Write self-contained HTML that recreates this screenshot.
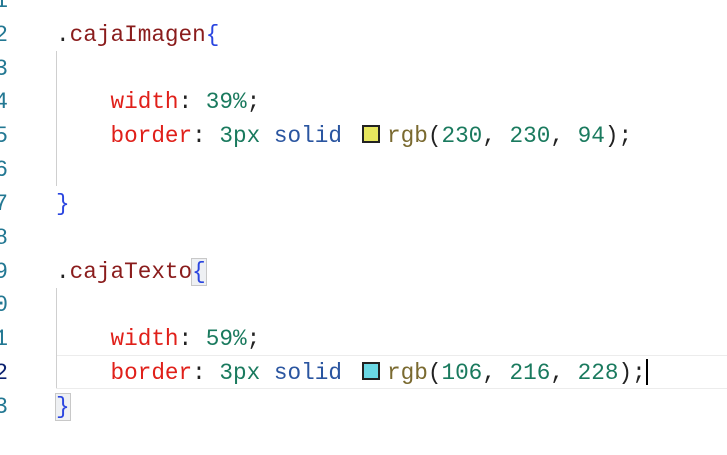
<!DOCTYPE html>
<html><head><style>
body{margin:0;width:727px;height:455px;background:#fff;overflow:hidden;position:relative;font-family:"Liberation Mono",monospace;font-size:22.7px}
.l{position:absolute;left:0;height:34px;line-height:34px;white-space:pre;width:727px}
.n{position:absolute;right:719px;color:#237893;text-align:right}
.c{position:absolute;left:56px}
.s{color:#8a1c1c}.p{color:#e0201a}.v{color:#1a7a5e}.k{color:#2a55a0}.b{color:#2a45e0}.f{color:#7a6a30}.d{color:#222}
.sw{display:inline-block;width:14px;height:14px;border:2px solid #222;vertical-align:-1px;margin:0 7px 0 20px}
.g{position:absolute;left:56px;width:1px;background:#cfcfcf}
.m{outline:1px solid #c8c8c8;background:#eef0f3}
</style></head><body>
<div style="position:absolute;left:56px;right:0;top:355px;height:32px;border-top:1px solid #ececec;border-bottom:1px solid #ececec"></div>
<div class="g" style="top:51px;height:135px"></div>
<div class="g" style="top:288px;height:100px"></div>
<div class="l" style="top:-16px"><span class="n">11</span></div>
<div class="l" style="top:18px"><span class="n">12</span><span class="c"><span class="d">.</span><span class="s">cajaImagen</span><span class="b">{</span></span></div>
<div class="l" style="top:52px"><span class="n">13</span></div>
<div class="l" style="top:85px"><span class="n">14</span><span class="c">    <span class="p">width</span><span class="d">: </span><span class="v">39%</span><span class="d">;</span></span></div>
<div class="l" style="top:119px"><span class="n">15</span><span class="c">    <span class="p">border</span><span class="d">: </span><span class="v">3px</span> <span class="k">solid</span><span class="sw" style="background:rgb(230,230,94)"></span><span class="f">rgb</span><span class="d">(</span><span class="v">230</span><span class="d">, </span><span class="v">230</span><span class="d">, </span><span class="v">94</span><span class="d">);</span></span></div>
<div class="l" style="top:153px"><span class="n">16</span></div>
<div class="l" style="top:187px"><span class="n">17</span><span class="c"><span class="b">}</span></span></div>
<div class="l" style="top:221px"><span class="n">18</span></div>
<div class="l" style="top:255px"><span class="n">19</span><span class="c"><span class="d">.</span><span class="s">cajaTexto</span><span class="b m">{</span></span></div>
<div class="l" style="top:288px"><span class="n">20</span></div>
<div class="l" style="top:322px"><span class="n">21</span><span class="c">    <span class="p">width</span><span class="d">: </span><span class="v">59%</span><span class="d">;</span></span></div>
<div class="l" style="top:356px"><span class="n" style="color:#0b216f">22</span><span class="c">    <span class="p">border</span><span class="d">: </span><span class="v">3px</span> <span class="k">solid</span><span class="sw" style="background:rgb(106,216,228)"></span><span class="f">rgb</span><span class="d">(</span><span class="v">106</span><span class="d">, </span><span class="v">216</span><span class="d">, </span><span class="v">228</span><span class="d">);</span><span style="display:inline-block;width:2px;height:26px;background:#000;vertical-align:-6px"></span></span></div>
<div class="l" style="top:390px"><span class="n">23</span><span class="c"><span class="b m">}</span></span></div>
</body></html>
